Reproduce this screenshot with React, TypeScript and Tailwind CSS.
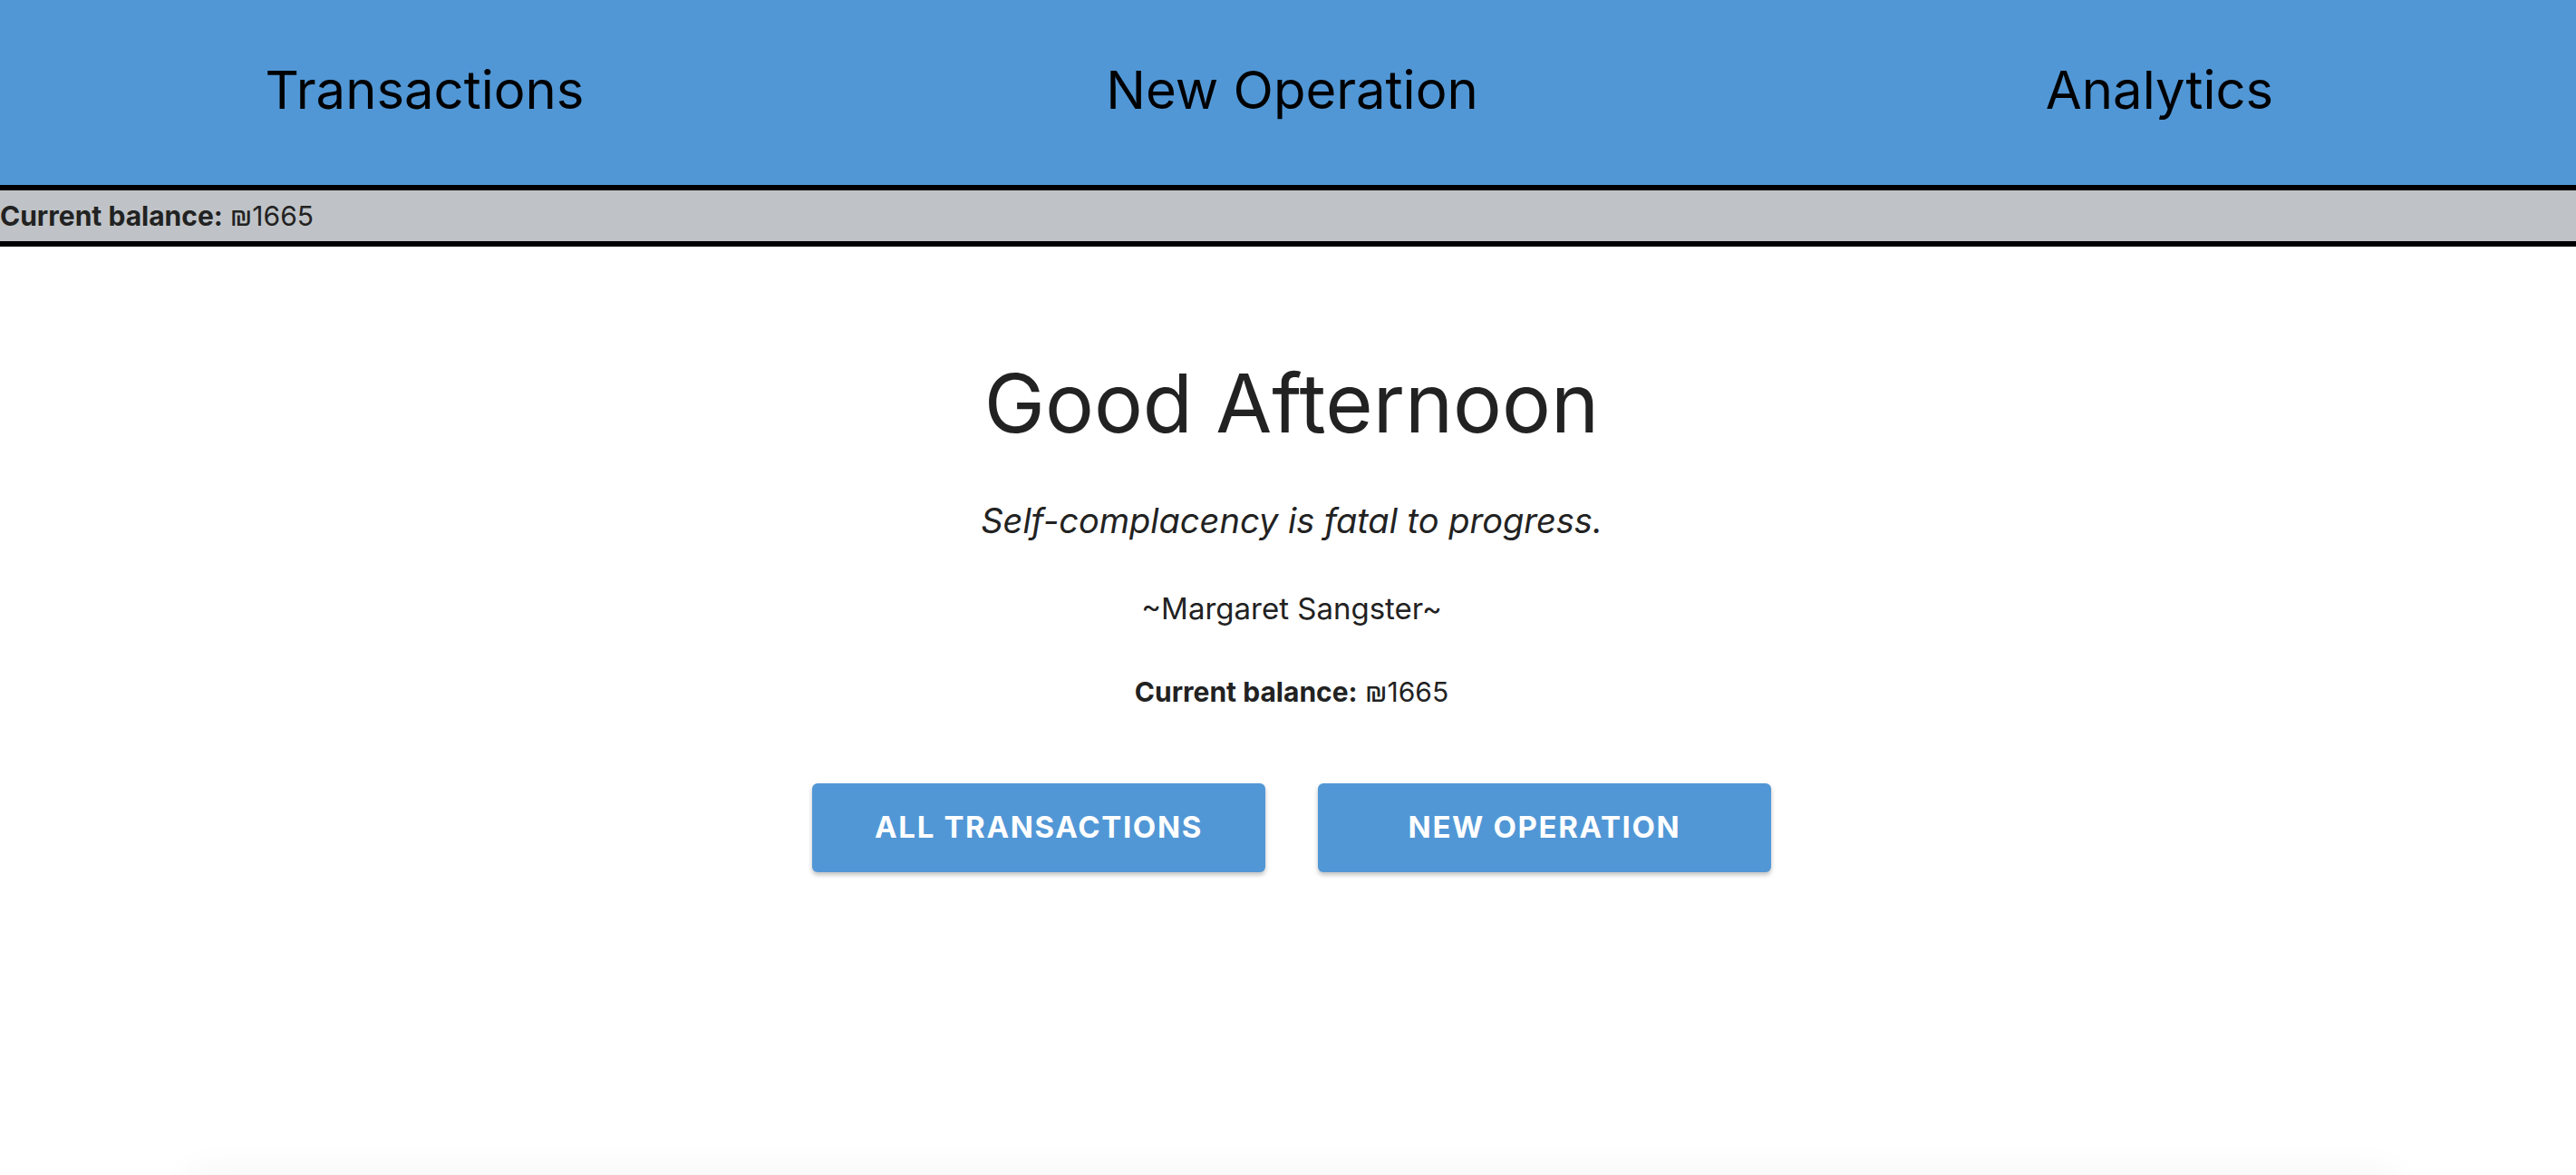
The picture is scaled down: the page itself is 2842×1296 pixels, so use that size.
export default function App() {
  const font = { fontFamily: "Inter, 'Noto Sans', sans-serif" };
  const navItems = ["Transactions", "New Operation", "Analytics"];

  return (
    <div className="min-h-screen overflow-hidden bg-white text-[#222222]" style={font}>
      <header className="h-[204px] overflow-hidden bg-[#5197d6]">
        <nav className="-ml-[10px] grid h-full w-[2871px] grid-cols-3 items-center">
          {navItems.map((item) => (
            <a key={item} href="#" className="pb-[6px] text-center text-[58px] leading-none text-black">
              {item}
            </a>
          ))}
        </nav>
      </header>

      <div className="flex h-[68px] items-center border-y-[6px] border-black bg-[#bfc3c7] text-[30px]">
        <span className="font-bold">Current balance:</span>
        <span className="ml-2">₪1665</span>
      </div>

      <main className="flex flex-col items-center pl-[8px] pt-[117px]">
        <h1 className="text-[90px] leading-tight">Good Afternoon</h1>
        <p className="mt-[44px] text-[38px] italic">Self-complacency is fatal to progress.</p>
        <p className="mt-[44px] text-[33px]">~Margaret Sangster~</p>
        <p className="mt-[45px] text-[30px]">
          <span className="font-bold">Current balance:</span> ₪1665
        </p>

        <div className="mt-[78px] flex gap-[58px]">
          <button className="h-[98px] w-[500px] rounded-md bg-[#5197d6] text-[33px] font-bold uppercase tracking-wider text-white shadow-[0_3px_5px_rgba(0,0,0,0.25)]">
            All Transactions
          </button>
          <button className="h-[98px] w-[500px] rounded-md bg-[#5197d6] text-[33px] font-bold uppercase tracking-wider text-white shadow-[0_3px_5px_rgba(0,0,0,0.25)]">
            New Operation
          </button>
        </div>

        <div className="mt-[336px] h-[400px] w-[2437px] rounded-lg bg-white shadow-[0_-8px_40px_rgba(0,0,0,0.04)]" />
      </main>
    </div>
  );
}
